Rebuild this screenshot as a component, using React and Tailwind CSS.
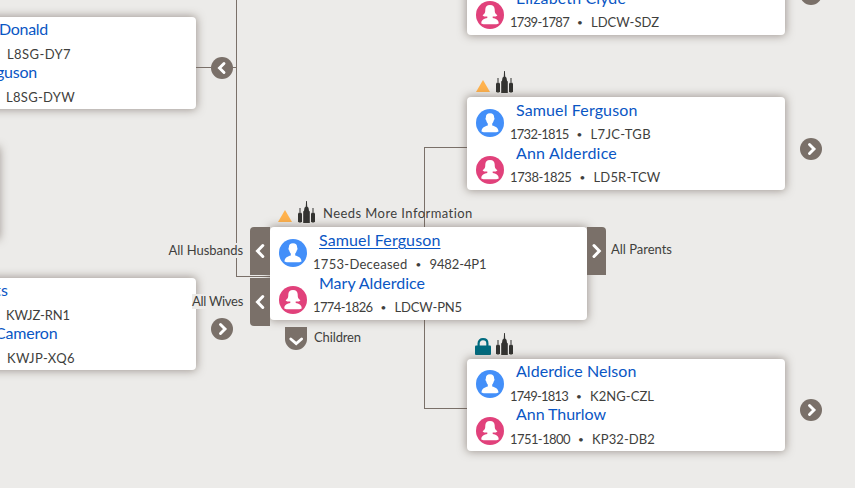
import { useLayoutEffect, useRef } from "react";

// Sets a run of text to a fixed measure by spreading the difference over its letters.
function Fit({ w, children, className = "" }) {
  const ref = useRef(null);
  useLayoutEffect(() => {
    const el = ref.current;
    el.style.letterSpacing = "0px";
    const natural = el.getBoundingClientRect().width;
    el.style.letterSpacing = `${(w - natural) / children.length}px`;
  }, [w, children]);
  return (
    <span ref={ref} className={`inline-block whitespace-nowrap ${className}`}>
      {children}
    </span>
  );
}

function Avatar({ female }) {
  return (
    <svg viewBox="0 0 28 28" className="size-7 shrink-0">
      <circle cx="14" cy="14" r="14" fill={female ? "#e1417b" : "#438ff9"} />
      {female ? (
        <path
          fill="#fff"
          d="M14 4c-3.200 0-4.700 1.800-4.700 4.500 0 2.500-.2 4-2.700 5.700 1 1.300 2.700 1.500 4.700 1.400v1.500c-3 .6-6 1.500-6 5.400.8.600 2 .7 3 .7h11.400c1 0 2.200-.1 3-.7 0-3.900-3-4.800-6-5.400v-1.500c2 .1 3.700-.1 4.700-1.400-2.500-1.700-2.700-3.200-2.700-5.700 0-2.700-1.500-4.500-4.700-4.500z"
        />
      ) : (
        <path
          fill="#fff"
          d="M14 4.200c-3 0-4.300 1.700-4.100 4.400-.6.200-.5 2.500.4 2.900.3 1.500.8 2.400 1.500 3.100v2c-2.800 1-6.200 1.800-6.300 5.900.8.600 2 .7 3 .7h11c1 0 2.200-.1 3-.7-.1-4.100-3.500-4.900-6.300-5.900v-2c.7-.7 1.200-1.600 1.500-3.100.9-.4 1-2.700.4-2.900.2-2.700-1.100-4.400-4.100-4.400z"
        />
      )}
    </svg>
  );
}

function Tab({ dir, className }) {
  return (
    <div className={`flex h-12 items-center justify-center bg-[#7a7069] ${className}`}>
      <svg viewBox="0 0 12 16" className="h-4 w-3">
        <path
          d={dir === "left" ? "M8.800 2.500 3.500 8l5.300 5.500" : "M3 2.500 8.300 8 3 13.500"}
          fill="none"
          stroke="#fff"
          strokeWidth="3"
          strokeLinecap="round"
        />
      </svg>
    </div>
  );
}

function Expand({ dir = "right" }) {
  return (
    <svg viewBox="0 0 22 22" className="size-[22px] shrink-0">
      <circle cx="11" cy="11" r="11" fill="#7a7069" />
      <path
        d={dir === "left" ? "M13 6.500 8.500 11l4.500 4.500" : "M9.500 6.500 14 11l-4.500 4.500"}
        fill="none"
        stroke="#fff"
        strokeWidth="2.900"
        strokeLinecap="round"
      />
    </svg>
  );
}

function Warning() {
  return (
    <svg viewBox="0 0 14 12" className="mb-px h-3 w-3.5">
      <path d="M7 0 14 12H0z" fill="#ffb24d" />
    </svg>
  );
}

function Lock() {
  return (
    <svg viewBox="0 0 16 17" className="h-[17px] w-4">
      <path d="M3.600 8V5.500C3.600 2.800 5.400 1.200 8 1.200s4.400 1.600 4.400 4.300V8" fill="none" stroke="#006b7f" strokeWidth="2.200" />
      <rect y="7.500" width="16" height="9.500" rx="1" fill="#006b7f" />
    </svg>
  );
}

function Temple() {
  return (
    <svg viewBox="0 0 17 22" className="h-[22px] w-[17px]">
      <g fill="#333331">
        <path d="M8.100 0h.8l.3 5.500 1.300 1.300.5 3 .8.700V22H5.200V10.500l.8-.7.500-3 1.300-1.300z" />
        <path d="M0 12.500 1 11.500h2l1 1V20.500l-1 1H1l-1-1z" />
        <path d="M13 12.500l1-1h2l1 1v8l-1 1h-2l-1-1z" />
      </g>
      <path fill="#777775" d="M1.200 7h1.600v4.500H1.200zM14.200 7h1.600v4.500h-1.600z" />
    </svg>
  );
}

// Row of status icons that sits on top of a card.
function Flags({ locked, note }) {
  return (
    <div className="mb-1 flex h-[22px] items-end">
      {locked ? <Lock /> : <Warning />}
      <div className={locked ? "ml-[5px]" : "ml-1.5"}>
        <Temple />
      </div>
      {note && (
        <div className="mb-0.5 ml-2 text-[13px] leading-[15px] text-[#3f3f3d]">
          <Fit w={150}>{note}</Fit>
        </div>
      )}
    </div>
  );
}

function Person({ p, low }) {
  return (
    <div>
      <div className="h-6 pl-1.5 text-base leading-6 text-[#0a56c4]">
        <Fit w={p.nw} className={p.active ? "underline decoration-1 underline-offset-2" : ""}>
          {p.name}
        </Fit>
      </div>
      <div className={`flex h-[19px] text-[13px] leading-6 text-[#3f3f3d] ${low ? "pt-px" : ""}`}>
        <Fit w={p.dw}>{p.dates}</Fit>
        <span className="w-[22px] text-center text-[10px]">•</span>
        <Fit w={p.iw}>{p.id}</Fit>
      </div>
    </div>
  );
}

const cardClass = "rounded bg-white shadow-[0_0_8px_1px_rgba(90,75,65,0.5)]";

function Couple({ people, low, className = "h-[93px] w-[318px] pt-px" }) {
  return (
    <div className={`${cardClass} flex shrink-0 gap-1.5 pl-[9px] ${className}`}>
      <div className="flex flex-col gap-[18.500px] pt-[11px]">
        <Avatar />
        <Avatar female />
      </div>
      <div>
        {people.map((p) => (
          <Person key={p.name} p={p} low={low} />
        ))}
      </div>
    </div>
  );
}

// A couple that is partly beyond the left edge of the tree's viewport.
function EdgeCouple({ people }) {
  return (
    <div className={`${cardClass} h-[92px] w-[318px] shrink-0 pl-[117px]`}>
      {people.map((p) => (
        <div key={p.id}>
          <div className="h-6 text-base leading-6 text-[#0a56c4]" style={{ paddingLeft: p.nx }}>
            <Fit w={p.nw}>{p.name}</Fit>
          </div>
          <div className="h-[19px] pt-px text-[13px] leading-6 text-[#3f3f3d]" style={{ paddingLeft: p.ix }}>
            <Fit w={p.iw}>{p.id}</Fit>
          </div>
        </div>
      ))}
    </div>
  );
}

function Label({ w, children, className = "" }) {
  return (
    <div className={`h-[15px] bg-[#ecebe9] text-[13px] leading-[15px] text-[#3f3f3d] ${className}`}>
      <Fit w={w}>{children}</Fit>
    </div>
  );
}

export default function App() {
  return (
    <div className="relative h-[488px] w-[855px] overflow-hidden bg-[#ecebe9] font-['Lato','Liberation_Sans',sans-serif]">
      {/* parents' connector */}
      <div className="absolute left-[424px] top-[147px] h-[262px] w-11 border-y border-l border-[#7a7069]" />

      {/* descendants */}
      <div className={`${cardClass} absolute left-[-319px] top-[147px] h-[92px] w-[318px]`} />
      <div className="absolute left-[-122px] top-[17px] flex items-center">
        <EdgeCouple
          people={[
            { name: "Donald", nx: 4, nw: 49, id: "L8SG-DY7", ix: 12, iw: 64 },
            { name: "guson", nx: 1, nw: 41, id: "L8SG-DYW", ix: 11, iw: 69 },
          ]}
        />
        <div className="mt-[9px] h-px w-[15px] bg-[#7a7069]" />
        <div className="mt-2.5">
          <Expand dir="left" />
        </div>
        <div className="mt-[9px] h-px w-[3px] bg-[#7a7069]" />
      </div>
      <div className="absolute left-[-122px] top-[278px] flex items-center gap-[15px]">
        <EdgeCouple
          people={[
            { name: "ts", nx: 0, nw: 13, id: "KWJZ-RN1", ix: 11, iw: 64 },
            { name: "Cameron", nx: 0, nw: 62.5, id: "KWJP-XQ6", ix: 12, iw: 68 },
          ]}
        />
        <div className="mt-2.5">
          <Expand />
        </div>
      </div>
      <div className="absolute left-[236px] top-0 h-[277px] w-[34px] border-b border-l border-[#7a7069]" />

      {/* ancestors */}
      <div className="absolute left-[467px] top-[-58px] flex items-center gap-[15px]">
        <Couple
          people={[
            { name: "John Clyde", nw: 80, dates: "1735-1790", dw: 60, id: "LDCW-SD2", iw: 68 },
            { name: "Elizabeth Clyde", nw: 110, dates: "1739-1787", dw: 59, id: "LDCW-SDZ", iw: 68 },
          ]}
        />
        <div className="mt-[11px]">
          <Expand />
        </div>
      </div>
      <div className="absolute left-[467px] top-[71px]">
        <div className="pl-[9px]">
          <Flags />
        </div>
        <div className="flex items-center gap-[15px]">
          <Couple
            people={[
              { name: "Samuel Ferguson", nw: 121.5, dates: "1732-1815", dw: 58.5, id: "L7JC-TGB", iw: 60.5 },
              { name: "Ann Alderdice", nw: 101, dates: "1738-1825", dw: 61.5, id: "LD5R-TCW", iw: 67 },
            ]}
          />
          <div className="mt-[11px]">
            <Expand />
          </div>
        </div>
      </div>
      <div className="absolute left-[467px] top-[333px]">
        <div className="pl-2">
          <Flags locked />
        </div>
        <div className="flex items-center gap-[15px]">
          <Couple
            low
            className="h-[92px] w-[318px]"
            people={[
              { name: "Alderdice Nelson", nw: 120.5, dates: "1749-1813", dw: 58, id: "K2NG-CZL", iw: 64 },
              { name: "Ann Thurlow", nw: 90, dates: "1751-1800", dw: 60, id: "KP32-DB2", iw: 63 },
            ]}
          />
          <div className="mt-2.5">
            <Expand />
          </div>
        </div>
      </div>

      {/* focus couple with its family tabs */}
      <div className="absolute left-[169px] top-[201px]">
        <div className="pl-[109px]">
          <Flags note="Needs More Information" />
        </div>
        <div className="flex items-start">
          <div className="flex w-[81px] flex-col items-end gap-9 pr-[7px] pt-4">
            <Label w={74.5}>All Husbands</Label>
            <Label w={51}>All Wives</Label>
          </div>
          <div className="relative flex flex-col gap-[3px]">
            <Tab dir="left" className="w-5 rounded-tl" />
            <Tab dir="left" className="w-5 rounded-bl" />
          </div>
          <Couple
            className="h-[93px] w-[317px] pt-px"
            people={[
              { name: "Samuel Ferguson", nw: 121.5, dates: "1753-Deceased", dw: 94.5, id: "9482-4P1", iw: 57, active: true },
              { name: "Mary Alderdice", nw: 106, dates: "1774-1826", dw: 59.5, id: "LDCW-PN5", iw: 67.5 },
            ]}
          />
          <Tab dir="right" className="w-[19px] rounded-tr" />
          <Label w={61} className="ml-[5px] mt-[15px]">All Parents</Label>
        </div>
        <div className="flex items-start gap-[7px] pl-[116px] pt-px">
          <svg viewBox="0 0 22 23" className="h-[23px] w-[22px]">
            <path d="M0 0h22v12a11 11 0 0 1-22 0z" fill="#7a7069" />
            <path d="M5.800 12 11.200 16.500 16.600 12" fill="none" stroke="#fff" strokeWidth="2.900" strokeLinecap="round" />
          </svg>
          <Label w={47} className="mt-[3px]">Children</Label>
        </div>
      </div>
    </div>
  );
}
